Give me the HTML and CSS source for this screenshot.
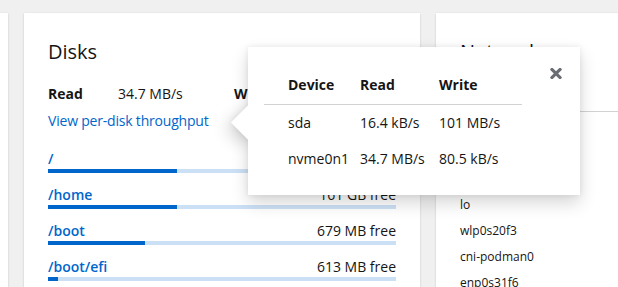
FILE: index.html
```html
<!DOCTYPE html>
<html lang="en">
<head>
<meta charset="utf-8">
<title>Storage</title>
<link rel="stylesheet" href="styles.css">
</head>
<body>
<div class="dashboard">
  <section class="card"></section>

  <section class="card disks">
    <h2 class="card-title">Disks</h2>
    <div class="throughput">
      <span class="label">Read</span><span class="value">34.7 MB/s</span>
      <span class="label">Write</span><span class="value">80.5 kB/s</span>
    </div>
    <a class="link" href="#">View per-disk throughput</a>
    <ul class="mounts">
      <li class="mount">
        <div class="mount-head"><a href="#">/</a><span class="free">32.4 GB free</span></div>
        <div class="bar"><div class="fill" style="width:37.1%"></div></div>
      </li>
      <li class="mount">
        <div class="mount-head"><a href="#">/home</a><span class="free">161 GB free</span></div>
        <div class="bar"><div class="fill" style="width:37.1%"></div></div>
      </li>
      <li class="mount">
        <div class="mount-head"><a href="#">/boot</a><span class="free">679 MB free</span></div>
        <div class="bar"><div class="fill" style="width:27.9%"></div></div>
      </li>
      <li class="mount">
        <div class="mount-head"><a href="#">/boot/efi</a><span class="free">613 MB free</span></div>
        <div class="bar"><div class="fill" style="width:2.9%"></div></div>
      </li>
    </ul>
  </section>

  <section class="card network">
    <h2 class="card-title">Network</h2>
    <div class="net-head">Interface</div>
    <ul class="ifaces">
      <li>lo</li>
      <li>wlp0s20f3</li>
      <li>cni-podman0</li>
      <li>enp0s31f6</li>
    </ul>
  </section>
</div>

<div class="popover" role="dialog">
  <div class="popover-arrow"></div>
  <div class="popover-body">
    <button class="close" aria-label="Close">
      <svg viewBox="0 89 352 334" width="12" height="11" aria-hidden="true"><path fill="currentColor" d="M242.72 256l100.07-100.07c12.28-12.28 12.28-32.19 0-44.48l-22.24-22.24c-12.28-12.28-32.19-12.28-44.48 0L176 189.28 75.930 89.210c-12.28-12.28-32.19-12.28-44.48 0L9.21 111.45c-12.28 12.28-12.28 32.19 0 44.48L109.28 256 9.21 356.07c-12.28 12.28-12.28 32.19 0 44.48l22.24 22.24c12.28 12.28 32.2 12.28 44.48 0L176 322.72l100.07 100.07c12.28 12.28 32.2 12.28 44.48 0l22.24-22.24c12.28-12.28 12.28-32.19 0-44.48L242.72 256z"/></svg>
    </button>
    <table class="disk-table">
      <colgroup>
        <col class="col-device"><col class="col-read"><col class="col-write">
      </colgroup>
      <thead>
        <tr><th>Device</th><th>Read</th><th>Write</th></tr>
      </thead>
      <tbody>
        <tr><td>sda</td><td>16.4 kB/s</td><td>101 MB/s</td></tr>
        <tr><td>nvme0n1</td><td>34.7 MB/s</td><td>80.5 kB/s</td></tr>
      </tbody>
    </table>
  </div>
</div>
</body>
</html>
```

FILE: styles.css
```css
* { box-sizing: border-box; }

html, body {
  margin: 0;
  padding: 0;
  height: 100%;
  overflow: hidden;
}

body {
  background: #f0f0f0;
  font-family: "Open Sans", "Liberation Sans", sans-serif;
  font-size: 14px;
  color: #151515;
  position: relative;
}

.dashboard {
  display: flex;
  gap: 16px;
  padding-top: 13px;
  margin-left: -388px;
}

.card {
  flex: 0 0 396px;
  height: 320px;
  background: #fff;
  box-shadow: 0 1px 2px 0 rgba(3,3,3,.12), 0 0 2px 0 rgba(3,3,3,.06);
  padding: 24px;
}

.card-title {
  margin: 0;
  font-size: 20px;
  line-height: 30px;
  font-weight: 400;
}

.throughput {
  display: grid;
  grid-template-columns: 70px 116px 70px auto;
  margin-top: 16px;
  line-height: 21px;
}

.label { font-weight: 700; }

.link {
  display: inline-block;
  margin-top: 6px;
  color: #06c;
  text-decoration: none;
  line-height: 21px;
  letter-spacing: -0.2px;
}

.mounts {
  list-style: none;
  margin: 17px 0 0;
  padding: 0;
  display: flex;
  flex-direction: column;
  gap: 11px;
}

.mount-head {
  display: flex;
  justify-content: space-between;
  line-height: 21px;
}

.mount-head a {
  color: #06c;
  text-decoration: none;
  font-weight: 600;
}

.bar {
  height: 4px;
  background: #cce0f5;
}

.fill {
  height: 100%;
  background: #06c;
}

.net-head {
  margin-top: 16px;
  line-height: 28px;
  border-bottom: 1px solid #d2d2d2;
  margin-left: -24px;
  margin-right: -24px;
  padding-left: 24px;
  font-size: 12px;
  font-weight: 700;
}

.ifaces {
  list-style: none;
  margin: 80px 0 0;
  padding: 0;
  font-size: 12px;
}

.ifaces li {
  line-height: 26px;
}

.popover {
  position: absolute;
  left: 248px;
  top: 47px;
  width: 332px;
  height: 148px;
  background: #fff;
  box-shadow: 0 8px 16px 0 rgba(3,3,3,.16), 0 0 6px 0 rgba(3,3,3,.08);
  z-index: 10;
}

.popover-arrow {
  position: absolute;
  left: -12.5px;
  top: 62.5px;
  width: 25px;
  height: 25px;
  background: #fff;
  transform: rotate(45deg);
  box-shadow: 0 8px 16px 0 rgba(3,3,3,.16), 0 0 6px 0 rgba(3,3,3,.08);
}

.popover-body {
  position: relative;
  height: 100%;
  background: #fff;
  padding: 19px 58px 18px 16px;
}

.close {
  position: absolute;
  left: 302px;
  top: 21px;
  width: 12px;
  height: 12px;
  padding: 0;
  border: 0;
  background: none;
  color: #6a6e73;
  display: flex;
}

.disk-table {
  border-collapse: collapse;
  table-layout: fixed;
  width: 258px;
}

.col-device { width: 88px; }
.col-read { width: 79px; }
.col-write { width: 91px; }

.disk-table th,
.disk-table td {
  text-align: left;
  padding: 0 0 0 8px;
  white-space: nowrap;
}

.disk-table th:first-child,
.disk-table td:first-child { padding-left: 24px; }

.disk-table th {
  font-weight: 700;
  height: 38px;
  border-bottom: 1px solid #d2d2d2;
}

.disk-table td {
  height: 36px;
}
```
